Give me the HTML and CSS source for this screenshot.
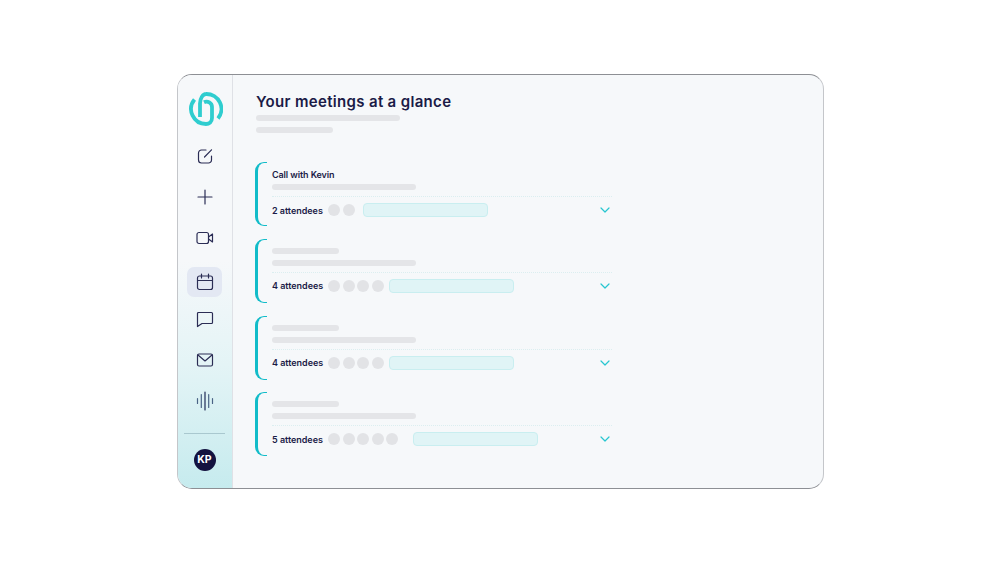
FILE: index.html
```html
<!DOCTYPE html>
<html lang="en">
<head>
<meta charset="utf-8">
<title>Meetings</title>
<link rel="stylesheet" href="styles.css">
</head>
<body>
<div class="window">
  <aside class="sidebar">
    <svg class="logo" viewBox="0 0 34 34" width="34" height="34" fill="none" stroke="#2fcdcf" stroke-width="3.800">
      <path d="M11 25V11.500C11 6 14 2 17 2A15 15 0 0 1 29 26.500"/>
      <path d="M5.500 7.500A15 15 0 0 0 17 32C20 32 23 30 23 26V15A5.500 5.500 0 0 0 15 10.200"/>
    </svg>
    <div class="nav">
      <div class="nav-item"><svg viewBox="0 0 18 18" width="18" height="18"><path d="M10 3H5.500A3 3 0 0 0 2.500 6v7a3 3 0 0 0 3 3h7a3 3 0 0 0 3-3V9"/><path d="M8.500 10 15.500 2.800"/></svg></div>
      <div class="nav-item"><svg viewBox="0 0 18 18" width="18" height="18"><path d="M9 2v14M2 9h14"/></svg></div>
      <div class="nav-item"><svg viewBox="0 0 18 18" width="18" height="18"><rect x="1" y="3.500" width="11.500" height="11" rx="2"/><path d="M12.500 8 16.500 5v8l-4-3"/></svg></div>
      <div class="nav-item active"><svg viewBox="0 0 18 18" width="18" height="18"><rect x="1.500" y="3" width="15" height="13.500" rx="2"/><path d="M1.500 7.500h15M5.500 1v4M12.500 1v4"/></svg></div>
      <div class="nav-item"><svg viewBox="0 0 18 18" width="18" height="18"><path d="M2.500 2.500h13A1 1 0 0 1 16.500 3.500v9a1 1 0 0 1-1 1H6l-4.500 3V3.500A1 1 0 0 1 2.500 2.500z"/></svg></div>
      <div class="nav-item"><svg viewBox="0 0 18 18" width="18" height="18"><rect x="1.500" y="3" width="15" height="12" rx="1.500"/><path d="M2 4l7 6 7-6"/></svg></div>
      <div class="nav-item"><svg class="wave" viewBox="0 0 18 18" width="18" height="18"><path d="M1.500 6.500v5M5.300 2.500v13M12.700 2.500v13M16.500 6.500v5"/><path class="wave-mid" d="M9 0v18"/></svg></div>
    </div>
    <div class="rule"></div>
    <div class="avatar">KP</div>
  </aside>
  <main class="content">
    <h1 class="title">Your meetings at a glance</h1>
    <div class="bar bar-intro-1"></div>
    <div class="bar bar-intro-2"></div>
    <div class="cards">
      <section class="card">
        <div class="card-name">Call with Kevin</div>
        <div class="bar bar-detail"></div>
        <div class="card-row">
          <span class="attendees">2 attendees</span>
          <div class="dots dots-two"><i></i><i></i></div>
          <div class="pill"></div>
          <svg class="chevron" viewBox="0 0 10 6" width="10" height="6"><path d="M1 1l4 4 4-4"/></svg>
        </div>
      </section>
      <section class="card">
        <div class="bar bar-name"></div>
        <div class="bar bar-detail"></div>
        <div class="card-row">
          <span class="attendees">4 attendees</span>
          <div class="dots dots-four"><i></i><i></i><i></i><i></i></div>
          <div class="pill"></div>
          <svg class="chevron" viewBox="0 0 10 6" width="10" height="6"><path d="M1 1l4 4 4-4"/></svg>
        </div>
      </section>
      <section class="card">
        <div class="bar bar-name"></div>
        <div class="bar bar-detail"></div>
        <div class="card-row">
          <span class="attendees">4 attendees</span>
          <div class="dots dots-four"><i></i><i></i><i></i><i></i></div>
          <div class="pill"></div>
          <svg class="chevron" viewBox="0 0 10 6" width="10" height="6"><path d="M1 1l4 4 4-4"/></svg>
        </div>
      </section>
      <section class="card">
        <div class="bar bar-name"></div>
        <div class="bar bar-detail"></div>
        <div class="card-row">
          <span class="attendees">5 attendees</span>
          <div class="dots dots-five"><i></i><i></i><i></i><i></i><i></i></div>
          <div class="pill"></div>
          <svg class="chevron" viewBox="0 0 10 6" width="10" height="6"><path d="M1 1l4 4 4-4"/></svg>
        </div>
      </section>
    </div>
  </main>
</div>
</body>
</html>
```
FILE: styles.css
```css
* { box-sizing: border-box; }
html, body { margin: 0; height: 100%; }
body {
  background: #fff;
  padding: 74px 0 0 177px;
  font-family: "Inter", "Liberation Sans", sans-serif;
  color: #1b1b47;
  overflow: hidden;
}
.window {
  width: 647px;
  height: 415px;
  display: flex;
  background: #f6f8fa;
  border: 1px solid #c4c6ca;
  border-top-color: #8d8f94;
  border-bottom-color: #8d8f94;
  border-radius: 15px;
  overflow: hidden;
}
.sidebar {
  width: 55px;
  flex: none;
  display: flex;
  flex-direction: column;
  align-items: center;
  padding: 17px 1px 0 0;
  background: linear-gradient(to bottom, #f6f8fa 0%, #f6f8fa 45%, #e4f4f6 70%, #c6ebee 100%);
  border-right: 1px solid #dfe1e6;
}
.logo { display: block; margin: 0 0 15px 2px; }
.nav { display: flex; flex-direction: column; align-items: center; gap: 11px; }
.nav-item {
  width: 35px;
  height: 30px;
  display: flex;
  align-items: center;
  justify-content: center;
  border-radius: 7px;
}
.nav-item svg { fill: none; stroke: #2b2d55; stroke-width: 1.200; stroke-linecap: round; stroke-linejoin: round; overflow: visible; }
.nav-item .wave { stroke: #4a6385; }
.nav-item .wave-mid { stroke: #1f2a55; }
.nav-item.active { background: #e3e8f3; margin: 3px 0 -4px; }
.rule { width: 41px; height: 1px; background: #a9c8cf; margin-top: 17px; }
.avatar {
  width: 22px;
  height: 22px;
  margin-top: 15px;
  border-radius: 50%;
  background: #13123f;
  color: #fff;
  font-size: 10.500px;
  font-weight: 700;
  line-height: 22px;
  text-align: center;
}
.content { flex: 1; padding: 17px 0 0 23px; }
.title {
  margin: 0 0 3px;
  font-size: 15px;
  line-height: 20px;
  font-weight: 600;
  letter-spacing: .33px;
  color: #1b1b47;
}
.bar { height: 6px; border-radius: 3px; background: #e4e5e8; }
.bar-intro-1 { width: 144px; margin-bottom: 6px; }
.bar-intro-2 { width: 77px; }
.cards { display: flex; flex-direction: column; gap: 12.800px; margin: 29px 0 0 -1px; }
.card {
  width: 357px;
  height: 64px;
  padding: 7px 0 0 17px;
  position: relative;
}
.card::before {
  content: "";
  position: absolute;
  left: 0;
  top: 0;
  bottom: 0;
  width: 9px;
  border-left: 3.500px solid #12bcc9;
  border-top: 1.500px solid #12bcc9;
  border-bottom: 1.500px solid #12bcc9;
  border-radius: 9px 0 0 9px;
}
.card-name { font-size: 9px; line-height: 11px; font-weight: 600; height: 11px; margin-bottom: 4px; letter-spacing: -.1px; }
.card .bar-name { width: 67px; margin: 2px 0 6px; }
.card .bar-detail { width: 144px; }
.card-row {
  display: flex;
  align-items: center;
  margin-top: 6px;
  height: 27px;
  border-top: 1px dotted #dbeef0;
}
.attendees { width: 56px; flex: none; font-size: 9px; font-weight: 600; white-space: nowrap; letter-spacing: -.02px; }
.dots { display: flex; gap: 2.600px; }
.dots-two { padding-right: 8.400px; }
.dots-four { padding-right: 5px; }
.dots-five { padding-right: 14.600px; }
.dots i { width: 12px; height: 12px; border-radius: 50%; background: #e2e3e6; display: block; }
.pill {
  width: 125px;
  height: 14px;
  border-radius: 4px;
  background: #e0f4f6;
  border: 1px solid #c9eef0;
}
.chevron { margin-left: auto; margin-right: 2px; fill: none; stroke: #27c6d0; stroke-width: 1.200; stroke-linecap: round; stroke-linejoin: round; }
```
